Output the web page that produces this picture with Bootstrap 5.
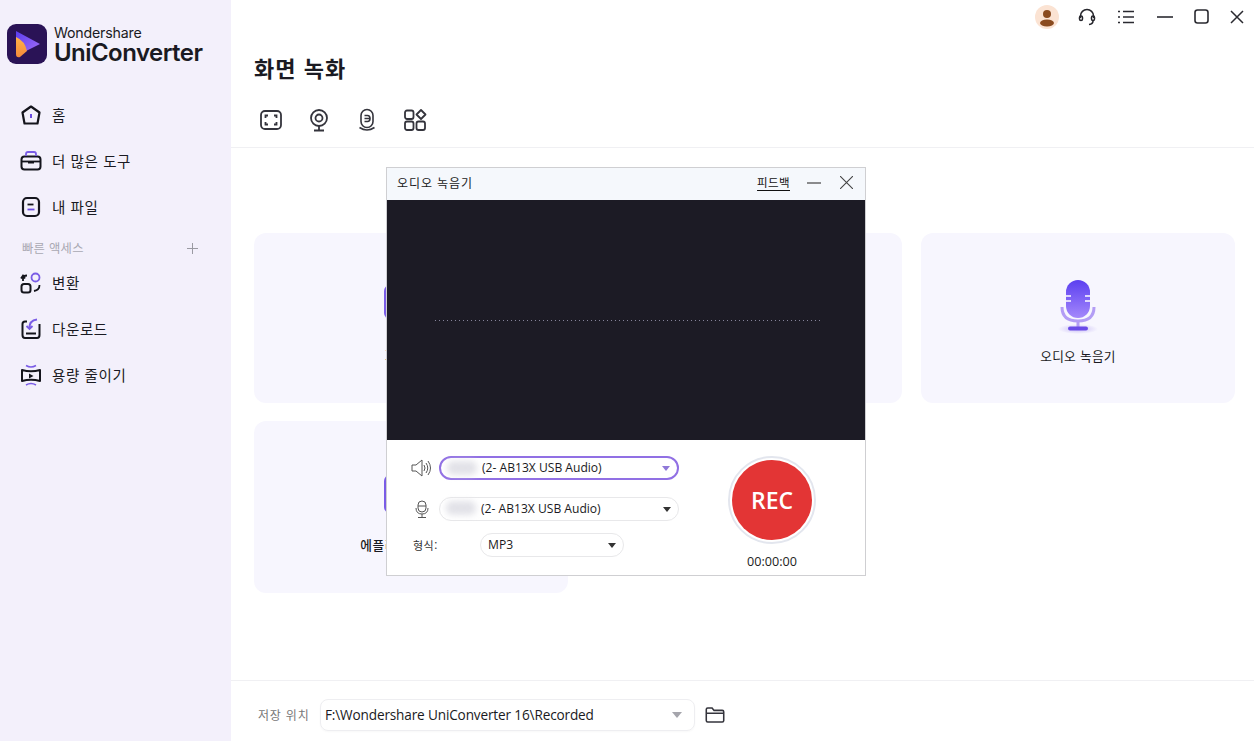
<!DOCTYPE html>
<html lang="ko">
<head>
<meta charset="utf-8">
<title>UniConverter</title>
<link href="https://cdn.jsdelivr.net/npm/bootstrap@5.3.0/dist/css/bootstrap.min.css" rel="stylesheet">
<style>
html,body{height:741px;overflow:hidden}
body{font-family:"Noto Sans CJK KR","Noto Sans",sans-serif;color:#1a1a22;background:#fff;font-size:14px}
.app-shell{height:741px;width:1254px}
.side-pane{width:231px;background:#f3f0fb;flex:none}
.brand-row{padding:24px 0 0 7px;height:92px;gap:8px}
.brand-text{font-family:Inter,"Liberation Sans",sans-serif;line-height:1}
.brand-top{font-size:14.2px;letter-spacing:-.2px;line-height:17px;margin-left:-1px}
.brand-main{font-size:24px;font-weight:600;letter-spacing:-.55px;line-height:23px;margin-left:-1px}
.side-link{height:46px;padding:0 0 0 20px;gap:10px;color:#1a1a22;font-size:14.5px;letter-spacing:.6px}
.side-link svg{flex:none}
.side-head{height:34px;padding:0 33px 0 22px;color:#a9a8b2;font-size:12.3px;margin:1px 0 -5px;letter-spacing:.3px}
.main-pane{min-width:0}
.win-bar{height:33px;padding-right:0}
.win-btn{width:36px;height:24px}
.win-gap{margin-left:3px}
.win-first{margin-left:9px}
.win-close{width:34px;margin-left:1px}
.page-title{font-size:22px;font-weight:700;line-height:32px;margin:18px 0 0 23px;letter-spacing:1px}
.tool-row{height:48px;padding-left:16px;margin-top:13px;border:0}
.tool-btn{width:48px}
.tool-rule{height:1px;background:#f0f0f3;margin-top:3px}
.tile-zone{flex:1;padding:85px 19px 0 23px;display:grid;grid-template-columns:repeat(3,314px);gap:18px 19.5px;grid-auto-rows:170px;align-content:start}
.tile{background:#f7f6fe;border-radius:12px;border:0;text-align:center;align-items:center;padding-top:47px;font-size:12.7px;letter-spacing:.3px}
.tile-side{padding-top:52px}
.tile-tall{height:172px;padding-top:54px}
.tile svg{display:block;margin-bottom:13px}
.tile-side svg{margin-bottom:9px}
.tile-label{line-height:18px}
.tile-strong{font-weight:500;letter-spacing:.5px}
.foot-bar{height:61px;border-top:1px solid #f0f0f3;padding:8px 0 0 27px}
.foot-label{color:#777;font-size:12px;width:62px;letter-spacing:.8px}
.path-box{width:375px;height:32px;border:1px solid #eeeef1;border-radius:8px;padding:0 12px 0 4px;font-family:"Open Sans","Noto Sans",sans-serif;font-size:13.6px;letter-spacing:-.15px;box-shadow:0 1px 2px rgba(0,0,0,.03)}
.folder-mark{margin-left:10px}
.rec-dialog{position:absolute;left:386px;top:167px;width:480px;height:409px;background:#fff;border:1px solid #cfcfd2;z-index:5}
.dlg-head{height:32px;background:#f5f8fc;padding:0 10px 3px;font-size:12px;letter-spacing:.9px}
.dlg-link{color:#111;text-decoration:underline;font-size:11.5px;letter-spacing:.4px;margin-right:17px;text-underline-offset:3px}
.dlg-min{margin-right:19px}
.dlg-x{margin-right:2px}
.dlg-screen{height:240px;background:#1c1b25}
.dot-line{width:386px;height:1px;margin-left:48px;background:repeating-linear-gradient(90deg,#85849a 0 1px,transparent 1px 4px)}
.dlg-body{height:135px}
.dlg-left{width:340px;padding:16px 0 0 24px}
.dev-row{height:24px}
.dev-row2{margin-top:17px}
.dev-row3{margin-top:12px}
.dev-icon{width:28px}
.dev-pill{width:240px;height:24px;border:1px solid #e8e8ea;border-radius:12px;padding:0 7px 0 41px;font-family:"Open Sans","Noto Sans",sans-serif;font-size:12.1px;position:relative}
.dev-on{border:2px solid #9170e4}
.fmt-label{width:69px;font-size:11px;color:#333;padding-left:2px;letter-spacing:.5px}
.fmt-pill{width:144px;height:24px;border:1px solid #e8e8ea;border-radius:12px;padding:0 7px;font-family:"Open Sans","Noto Sans",sans-serif;font-size:12.1px}
.smudge{position:absolute;left:6px;top:3px;width:30px;height:14px;background:#e2e2e8;border-radius:6px;filter:blur(3px)}
.rec-col{width:90px;padding-top:16px}
.rec-ring{width:88px;height:88px;border:2px solid #e3e6ee;border-radius:50%;flex:none}
.rec-core{width:80px;height:80px;background:#e33535;color:#fff;font-family:"Open Sans","Noto Sans",sans-serif;font-size:23px;font-weight:600;border-radius:50%}
.rec-time{font-family:"Open Sans","Noto Sans",sans-serif;font-size:12.6px;margin-top:10px;line-height:16px;color:#222;white-space:nowrap}
</style>
</head>
<body>
<div class="app-shell d-flex position-relative">

<aside class="side-pane d-flex flex-column">
  <div class="brand-row d-flex">
    <svg width="40" height="40" viewBox="0 0 40 40">
      <defs>
        <linearGradient id="lgP" x1="0" y1="0" x2="1" y2="1"><stop offset="0" stop-color="#5a3df0"/><stop offset="1" stop-color="#a06cf5"/></linearGradient>
        <linearGradient id="lgO" x1="0" y1="0" x2="0" y2="1"><stop offset="0" stop-color="#ffb347"/><stop offset="1" stop-color="#f58a3c"/></linearGradient>
      </defs>
      <rect width="40" height="40" rx="9" fill="#2a1356"/>
      <path d="M9 7 L33 20 L19 27 Q14 18 9 15 Z" fill="url(#lgP)"/>
      <path d="M9 13 Q18 17 20 27 L13 33 Q9 34 9 30 Z" fill="url(#lgO)"/>
    </svg>
    <div class="brand-text">
      <div class="brand-top">Wondershare</div>
      <div class="brand-main">UniConverter</div>
    </div>
  </div>
  <nav class="nav flex-column">
    <a class="nav-link side-link d-flex align-items-center" href="#">
      <svg width="22" height="22" viewBox="0 0 22 22" fill="none"><path d="M11 2.500 L19.500 8.500 L17.500 19.500 H4.500 L2.500 8.500 Z" stroke="#14141c" stroke-width="2.200" stroke-linejoin="round"/><path d="M11 10v4" stroke="#6a4be0" stroke-width="2"/></svg>
      <span>홈</span></a>
    <a class="nav-link side-link d-flex align-items-center" href="#">
      <svg width="22" height="22" viewBox="0 0 22 22" fill="none"><rect x="1.500" y="6.500" width="19" height="13" rx="3" stroke="#14141c" stroke-width="2"/><path d="M6 6V4q0-2 2-2h6q2 0 2 2v2" stroke="#7a5ce6" stroke-width="1.800"/><path d="M2 11.500h18" stroke="#14141c" stroke-width="1.800"/><path d="M8 12.500h6" stroke="#14141c" stroke-width="2"/></svg>
      <span>더 많은 도구</span></a>
    <a class="nav-link side-link d-flex align-items-center" href="#">
      <svg width="22" height="22" viewBox="0 0 22 22" fill="none"><rect x="3" y="2" width="16" height="18" rx="4" stroke="#14141c" stroke-width="2.200"/><path d="M7.500 8.500h6" stroke="#14141c" stroke-width="1.800"/><path d="M7.500 13.500h7" stroke="#6a4be0" stroke-width="1.800"/></svg>
      <span>내 파일</span></a>
    <div class="side-head d-flex align-items-center justify-content-between">
      <span>빠른 액세스</span>
      <svg width="11" height="11" viewBox="0 0 11 11"><path d="M5.500 0v11M0 5.500h11" stroke="#9a9aa2" stroke-width="1"/></svg>
    </div>
    <a class="nav-link side-link d-flex align-items-center" href="#">
      <svg width="22" height="22" viewBox="0 0 22 22" fill="none"><circle cx="15.500" cy="5.500" r="4" stroke="#7a5ce6" stroke-width="1.800"/><rect x="1.500" y="12" width="9" height="8.500" rx="2.500" stroke="#14141c" stroke-width="2"/><path d="M3 9V6.500Q3 3.500 7 3.500M1 6.500l2-3 2 3" stroke="#14141c" stroke-width="1.800"/><path d="M19.500 13q0 5-5.500 6" stroke="#14141c" stroke-width="1.800"/></svg>
      <span>변환</span></a>
    <a class="nav-link side-link d-flex align-items-center" href="#">
      <svg width="22" height="22" viewBox="0 0 22 22" fill="none"><path d="M7 3.500H5Q2.500 3.500 2.500 6v11Q2.500 20 5 20h12q2.500 0 2.500-3V6" stroke="#14141c" stroke-width="2"/><path d="M17 1.500Q9 2.500 9.500 10.500M6.500 8l3 3 3-3" stroke="#7a5ce6" stroke-width="1.800"/><path d="M6 15.500h10" stroke="#14141c" stroke-width="2"/></svg>
      <span>다운로드</span></a>
    <a class="nav-link side-link d-flex align-items-center" href="#">
      <svg width="22" height="22" viewBox="0 0 22 22" fill="none"><path d="M2 6q9 2.500 18 0v11q-9-2.500-18 0Z" stroke="#14141c" stroke-width="2" stroke-linejoin="round"/><path d="M9 9.500l4.500 2.500L9 14.500Z" fill="#14141c"/><path d="M6 1.500q5 3 10 0M6 21q5-3 10 0" stroke="#7a5ce6" stroke-width="1.500"/></svg>
      <span>용량 줄이기</span></a>
  </nav>
</aside>

<main class="main-pane flex-grow-1 d-flex flex-column">
  <div class="win-bar d-flex justify-content-end align-items-center">
    <svg width="26" height="26" viewBox="0 0 26 26"><circle cx="13" cy="13" r="12" fill="#fbe3d3"/><circle cx="13" cy="10" r="4" fill="#8a4a1e"/><ellipse cx="13" cy="19" rx="7" ry="3.500" fill="#8a4a1e"/></svg>
    <span class="win-btn win-first d-flex align-items-center justify-content-center"><svg width="18" height="18" viewBox="0 0 18 18" fill="none" stroke="#26262c" stroke-width="1.500"><path d="M2.500 10V8a6.500 6.500 0 0 1 13 0v2"/><rect x="1.500" y="8" width="3" height="4.500" rx="1.500"/><rect x="13.500" y="8" width="3" height="4.500" rx="1.500"/><path d="M15 13q0 3-4 3.500"/></svg></span>
    <span class="win-btn win-gap d-flex align-items-center justify-content-center"><svg width="16" height="14" viewBox="0 0 16 14" stroke="#2a2a30" stroke-width="1.500"><path d="M0 1.500h2M5 1.500h11M0 7h2M5 7h11M0 12.500h2M5 12.500h11"/></svg></span>
    <span class="win-btn win-gap d-flex align-items-center justify-content-center"><svg width="16" height="2" viewBox="0 0 16 2"><path d="M0 1h16" stroke="#2a2a30" stroke-width="1.600"/></svg></span>
    <span class="win-btn d-flex align-items-center justify-content-center"><svg width="15" height="15" viewBox="0 0 15 15" fill="none"><rect x="1" y="1" width="13" height="13" rx="2.500" stroke="#2a2a30" stroke-width="1.600"/></svg></span>
    <span class="win-btn win-close d-flex align-items-center justify-content-center"><svg width="14" height="14" viewBox="0 0 14 14"><path d="M1 1l12 12M13 1L1 13" stroke="#2a2a30" stroke-width="1.500"/></svg></span>
  </div>
  <h1 class="page-title">화면 녹화</h1>
  <div class="tool-row d-flex align-items-center">
    <span class="tool-btn d-flex justify-content-center"><svg width="24" height="24" viewBox="0 0 24 24" fill="none" stroke="#34343c" stroke-width="1.800"><rect x="2" y="3" width="20" height="18" rx="4"/><path d="M6.500 10V7.500H9M17.500 10V7.500H15M6.500 14v2.500H9M17.500 14v2.500H15"/></svg></span>
    <span class="tool-btn d-flex justify-content-center"><svg width="24" height="24" viewBox="0 0 24 24" fill="none" stroke="#34343c" stroke-width="1.800"><circle cx="12" cy="10" r="8"/><circle cx="12" cy="10" r="3.500"/><path d="M12 18v4M7 22.500h10"/></svg></span>
    <span class="tool-btn d-flex justify-content-center"><svg width="24" height="24" viewBox="0 0 24 24" fill="none" stroke="#34343c" stroke-width="1.600"><rect x="6" y="1.500" width="12" height="18" rx="6"/><path d="M9.500 7.500h3q2.500 0 2.500 3t-2.500 3h-3M9.500 10.500h5M4.500 19.500q7.500 5 15 0"/></svg></span>
    <span class="tool-btn d-flex justify-content-center"><svg width="24" height="24" viewBox="0 0 24 24" fill="none" stroke="#34343c" stroke-width="1.800"><rect x="2" y="2.500" width="8.500" height="8.500" rx="2"/><rect x="2" y="13.500" width="8.500" height="8.500" rx="2"/><rect x="13.500" y="13.500" width="8.500" height="8.500" rx="2"/><path d="M18 2l4.500 4.500L18 11l-4.500-4.500Z" stroke-linejoin="round"/></svg></span>
  </div>
  <div class="tool-rule"></div>

  <section class="tile-zone">
    <div class="card tile tile-side">
      <svg width="54" height="52" viewBox="0 0 54 52"><rect width="54" height="34" rx="6" fill="#7a5ce6"/></svg>
      <div class="tile-label">화면 녹화</div>
    </div>
    <div class="card tile tile-side">
      <svg width="54" height="52" viewBox="0 0 54 52"><rect width="54" height="34" rx="6" fill="#7a5ce6"/></svg>
      <div class="tile-label">웹캠 녹화</div>
    </div>
    <div class="card tile">
      <svg width="44" height="54" viewBox="0 0 44 54">
        <defs>
          <linearGradient id="micA" x1="0" y1="0" x2="0" y2="1"><stop offset="0" stop-color="#5b3ff0"/><stop offset="1" stop-color="#a488fb"/></linearGradient>
          <radialGradient id="micS"><stop offset="0" stop-color="#c9bdf5"/><stop offset="1" stop-color="#f7f6fe"/></radialGradient>
        </defs>
        <ellipse cx="22" cy="49" rx="20" ry="5" fill="url(#micS)"/>
        <rect x="10" y="0" width="24" height="38" rx="12" fill="url(#micA)"/>
        <path d="M10 16h5M10 21h5M29 16h5M29 21h5" stroke="#fff" stroke-width="1.500"/>
        <path d="M6 27c0 10 6 14 16 14s16-4 16-14" fill="none" stroke="#b39df5" stroke-width="3"/>
        <path d="M22 41v6" stroke="#b39df5" stroke-width="3"/>
        <rect x="12" y="46.500" width="20" height="4" rx="2" fill="#6a4be8"/>
      </svg>
      <div class="tile-label">오디오 녹음기</div>
    </div>
    <div class="card tile tile-side tile-tall">
      <svg width="54" height="52" viewBox="0 0 54 52"><rect width="54" height="38" rx="6" fill="#7a5ce6"/></svg>
      <div class="tile-label tile-strong">에플리케이션 녹화</div>
    </div>
  </section>

  <footer class="foot-bar d-flex align-items-center">
    <span class="foot-label">저장 위치</span>
    <div class="path-box d-flex align-items-center justify-content-between">
      <span>F:\Wondershare UniConverter 16\Recorded</span>
      <svg width="10" height="6" viewBox="0 0 10 6"><path d="M0 0h10L5 6Z" fill="#a5a5ac"/></svg>
    </div>
    <svg class="folder-mark" width="20" height="16" viewBox="1 1 20 16.500" fill="none"><path d="M2 15V3.500Q2 2 3.500 2H8l2 2.500h8.500Q20 4.500 20 6v9q0 1.500-1.500 1.500h-15Q2 16.500 2 15ZM2 7.500h18" stroke="#34343c" stroke-width="1.600"/></svg>
  </footer>
</main>

<div class="rec-dialog d-flex flex-column">
  <div class="dlg-head d-flex align-items-center">
    <span class="flex-grow-1">오디오 녹음기</span>
    <a href="#" class="dlg-link">피드백</a>
    <svg class="dlg-min" width="14" height="2" viewBox="0 0 14 2"><path d="M0 1h14" stroke="#444" stroke-width="1.200"/></svg>
    <svg class="dlg-x" width="13" height="13" viewBox="0 0 13 13"><path d="M0 0l13 13M13 0L0 13" stroke="#444" stroke-width="1.100"/></svg>
  </div>
  <div class="dlg-screen d-flex align-items-center"><div class="dot-line"></div></div>
  <div class="dlg-body d-flex">
    <div class="dlg-left">
      <div class="dev-row d-flex align-items-center">
        <span class="dev-icon d-flex"><svg width="20" height="18" viewBox="0 0 20 18" fill="none" stroke="#555" stroke-width="1"><path d="M1 6h4l6-5v16l-6-5H1Z"/><path d="M13 6q2 3 0 6M15 4q3.500 5 0 10M17 2q5 7 0 14"/></svg></span>
        <div class="dev-pill dev-on d-flex align-items-center justify-content-between"><i class="smudge"></i><span>(2- AB13X USB Audio)</span><svg width="8" height="5" viewBox="0 0 8 5"><path d="M0 0h8L4 5Z" fill="#8f78d8"/></svg></div>
      </div>
      <div class="dev-row dev-row2 d-flex align-items-center">
        <span class="dev-icon d-flex ps-1"><svg width="14" height="18" viewBox="0 0 14 18" fill="none" stroke="#555" stroke-width="1"><rect x="3" y="1" width="8" height="11" rx="4"/><path d="M1 8q0 6 6 6t6-6M7 14v3M3 17.500h8M3 6h8"/></svg></span>
        <div class="dev-pill d-flex align-items-center justify-content-between"><i class="smudge"></i><span>(2- AB13X USB Audio)</span><svg width="8" height="5" viewBox="0 0 8 5"><path d="M0 0h8L4 5Z" fill="#333"/></svg></div>
      </div>
      <div class="dev-row dev-row3 d-flex align-items-center">
        <span class="fmt-label">형식:</span>
        <div class="fmt-pill d-flex align-items-center justify-content-between"><span>MP3</span><svg width="8" height="5" viewBox="0 0 8 5"><path d="M0 0h8L4 5Z" fill="#333"/></svg></div>
      </div>
    </div>
    <div class="rec-col d-flex flex-column align-items-center">
      <div class="rec-ring d-flex align-items-center justify-content-center"><div class="rec-core d-flex align-items-center justify-content-center">REC</div></div>
      <div class="rec-time">00:00:00</div>
    </div>
  </div>
</div>

</div>
<script src="https://cdn.jsdelivr.net/npm/bootstrap@5.3.0/dist/js/bootstrap.bundle.min.js"></script>
</body>
</html>
